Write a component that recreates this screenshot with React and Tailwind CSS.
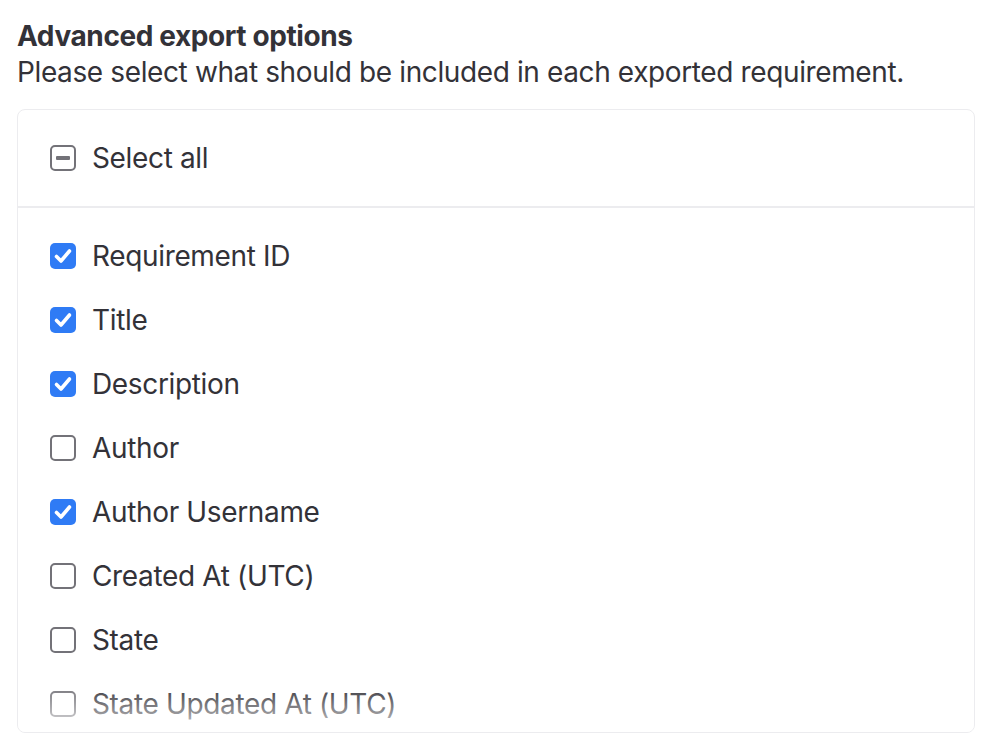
import React from "react";

const items = [
  ["Requirement ID", true],
  ["Title", true],
  ["Description", true],
  ["Author", false],
  ["Author Username", true],
  ["Created At (UTC)", false],
  ["State", false],
  ["State Updated At (UTC)", false],
];

function Box({ state }) {
  if (state === true) {
    return (
      <span className="flex h-[26px] w-[26px] shrink-0 items-center justify-center rounded-[5px] bg-[#2f7bf5]">
        <svg width="26" height="26" viewBox="0 0 26 26" fill="none">
          <path d="M6.5 13.5l4.5 4.5 8.5-10" stroke="white" strokeWidth="3.6" strokeLinecap="round" strokeLinejoin="round" />
        </svg>
      </span>
    );
  }
  if (state === "mixed") {
    return (
      <span className="flex h-[26px] w-[26px] shrink-0 items-center justify-center rounded-[5px] border-2 border-[#737278] bg-white">
        <span className="h-[4px] w-[14px] rounded-[1px] bg-[#737278]" />
      </span>
    );
  }
  return <span className="h-[26px] w-[26px] shrink-0 rounded-[5px] border-2 border-[#737278] bg-white" />;
}

function Row({ label, state }) {
  return (
    <div className="flex h-[64px] items-center gap-4">
      <Box state={state} />
      <span>{label}</span>
    </div>
  );
}

export default function App() {
  return (
    <div className="min-h-[756px] bg-white pl-[17px] pr-[15px] pt-[18px] text-[#333238] text-[28px]" style={{ fontFamily: "Inter, 'Noto Sans', sans-serif" }}>
      <h2 className="text-[28px] font-bold leading-[36px] tracking-[-0.4px]">Advanced export options</h2>
      <p className="leading-[36px] tracking-[-0.38px]">Please select what should be included in each exported requirement.</p>
      <div className="relative mt-[19px] h-[624px] overflow-hidden rounded-[8px] border border-[#ececef] tracking-[-0.35px]">
        <div className="border-b-2 border-[#ececef] px-8 py-4">
          <Row label="Select all" state="mixed" />
        </div>
        <div className="px-8 pt-4">
          {items.map(([l, s]) => (
            <Row key={l} label={l} state={s} />
          ))}
        </div>
        <div className="pointer-events-none absolute bottom-0 left-0 right-0 h-[48px] bg-gradient-to-b from-white/0 to-white/80" />
      </div>
    </div>
  );
}
